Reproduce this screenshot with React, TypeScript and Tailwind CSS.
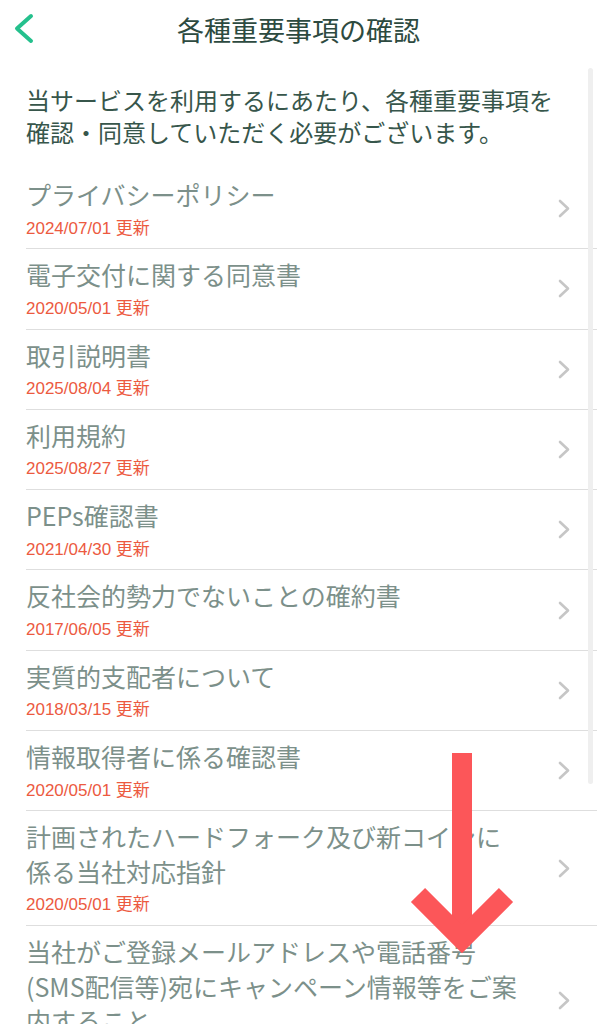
import React from "react";

const JP = '"Noto Sans CJK JP", "Noto Sans", sans-serif';
const DATE = '"Liberation Sans", "Noto Sans CJK JP", sans-serif';

const items: { title: string; date: string }[] = [
  { title: "プライバシーポリシー", date: "2024/07/01" },
  { title: "電子交付に関する同意書", date: "2020/05/01" },
  { title: "取引説明書", date: "2025/08/04" },
  { title: "利用規約", date: "2025/08/27" },
  { title: "PEPs確認書", date: "2021/04/30" },
  { title: "反社会的勢力でないことの確約書", date: "2017/06/05" },
  { title: "実質的支配者について", date: "2018/03/15" },
  { title: "情報取得者に係る確認書", date: "2020/05/01" },
  { title: "計画されたハードフォーク及び新コインに係る当社対応指針", date: "2020/05/01" },
  {
    title: "当社がご登録メールアドレスや電話番号(SMS配信等)宛にキャンペーン情報等をご案内すること",
    date: "2020/05/01",
  },
];

function Chevron() {
  return (
    <svg width="12" height="19" viewBox="0 0 12 19" className="shrink-0">
      <polyline
        points="2,2 10,9.5 2,17"
        fill="none"
        stroke="#c6c6c6"
        strokeWidth="2.6"
        strokeLinecap="round"
        strokeLinejoin="round"
      />
    </svg>
  );
}

export default function App() {
  return (
    <div className="relative w-[597px] h-[1024px] overflow-hidden bg-white" style={{ fontFamily: JP }}>
      {/* Header */}
      <div className="relative h-[58px] flex items-center justify-center">
        <svg width="20" height="31" viewBox="0 0 20 31" className="absolute left-[14px] top-[13px]">
          <polyline
            points="17,3 3,15.5 17,28"
            fill="none"
            stroke="#25c08d"
            strokeWidth="4"
            strokeLinecap="round"
            strokeLinejoin="round"
          />
        </svg>
        <h1 className="text-[27px] leading-[36px] text-[#2d4a40] font-normal pt-[2px]">各種重要事項の確認</h1>
      </div>

      {/* Intro */}
      <div className="pl-[26px] pt-[26px] w-[562px]">
        <p className="text-[24px] leading-[31.5px] text-[#37564b]">
          当サービスを利用するにあたり、各種重要事項を確認・同意していただく必要がございます。
        </p>
      </div>

      {/* List */}
      <div className="ml-[26px] mt-[22px]">
        {items.map((it, i) => (
          <div key={i} className="flex items-center border-b border-[#dedede]">
            <div className="w-[497px] pt-[8px] pb-[9.8px]">
              <div className="text-[25px] leading-[34.5px] text-[#7c908a]">{it.title}</div>
              <div
                className="mt-[7px] text-[17px] leading-[20px] text-[#ec5a3f]"
                style={{ fontFamily: DATE }}
              >
                {it.date} 更新
              </div>
            </div>
            <div className="ml-[35px]">
              <Chevron />
            </div>
          </div>
        ))}
      </div>

      {/* Scroll indicator */}
      <div className="absolute left-[588px] top-[68px] w-[5px] h-[716px] rounded-full bg-[#efefef]" />

      {/* Red arrow overlay */}
      <svg
        className="absolute left-0 top-0 pointer-events-none"
        width="597"
        height="1024"
        viewBox="0 0 597 1024"
      >
        <line x1="462" y1="753" x2="462" y2="935" stroke="#fc5659" strokeWidth="20" />
        <polyline
          points="418,895 462,939 506,895"
          fill="none"
          stroke="#fc5659"
          strokeWidth="20"
          strokeLinejoin="miter"
          strokeMiterlimit="4"
        />
      </svg>
    </div>
  );
}
